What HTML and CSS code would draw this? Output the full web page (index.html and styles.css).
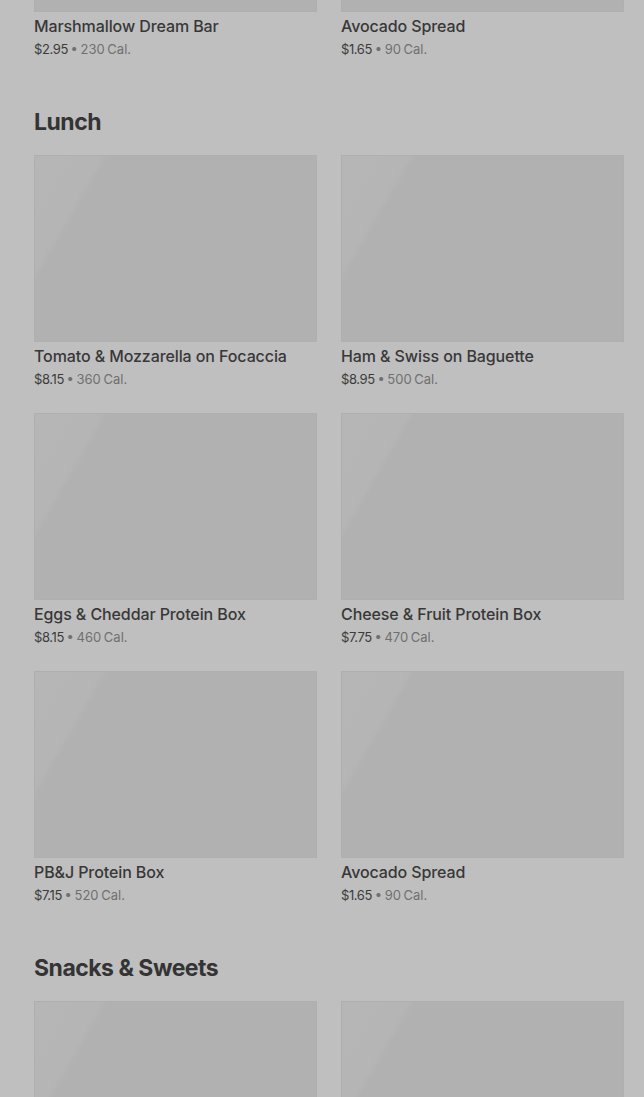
FILE: index.html
```html
<!DOCTYPE html>
<html lang="en">
<head>
<meta charset="utf-8">
<title>Menu</title>
<link rel="stylesheet" href="styles.css">
</head>
<body>
<main class="page">
  <section class="section section-first">
    <div class="grid">
      <div class="card"><div class="thumb"></div><div class="name">Marshmallow Dream Bar</div><div class="meta"><span class="price">$2.95</span> <span class="cal">• 230 Cal.</span></div></div>
      <div class="card"><div class="thumb"></div><div class="name">Avocado Spread</div><div class="meta"><span class="price">$1.65</span> <span class="cal">• 90 Cal.</span></div></div>
    </div>
  </section>
  <section class="section">
    <h2 class="heading">Lunch</h2>
    <div class="grid">
      <div class="card"><div class="thumb"></div><div class="name">Tomato &amp; Mozzarella on Focaccia</div><div class="meta"><span class="price">$8.15</span> <span class="cal">• 360 Cal.</span></div></div>
      <div class="card"><div class="thumb"></div><div class="name">Ham &amp; Swiss on Baguette</div><div class="meta"><span class="price">$8.95</span> <span class="cal">• 500 Cal.</span></div></div>
      <div class="card"><div class="thumb"></div><div class="name">Eggs &amp; Cheddar Protein Box</div><div class="meta"><span class="price">$8.15</span> <span class="cal">• 460 Cal.</span></div></div>
      <div class="card"><div class="thumb"></div><div class="name">Cheese &amp; Fruit Protein Box</div><div class="meta"><span class="price">$7.75</span> <span class="cal">• 470 Cal.</span></div></div>
      <div class="card"><div class="thumb"></div><div class="name">PB&amp;J Protein Box</div><div class="meta"><span class="price">$7.15</span> <span class="cal">• 520 Cal.</span></div></div>
      <div class="card"><div class="thumb"></div><div class="name">Avocado Spread</div><div class="meta"><span class="price">$1.65</span> <span class="cal">• 90 Cal.</span></div></div>
    </div>
  </section>
  <section class="section">
    <h2 class="heading">Snacks &amp; Sweets</h2>
    <div class="grid">
      <div class="card"><div class="thumb"></div></div>
      <div class="card"><div class="thumb"></div></div>
    </div>
  </section>
</main>
</body>
</html>
```

FILE: styles.css
```css
html, body {
  margin: 0;
  padding: 0;
  background: #bfbfbf;
  overflow: hidden;
}
body {
  font-family: Inter, "Liberation Sans", sans-serif;
  color: #363636;
}
.page {
  padding: 0 20px 0 34px;
  margin-top: -175px;
}
.section + .section {
  margin-top: 48px;
}
.heading {
  margin: 0 0 17px;
  font-size: 23px;
  line-height: 32px;
  font-weight: 700;
  letter-spacing: -0.5px;
  color: #343434;
}
.grid {
  display: grid;
  grid-template-columns: 283px 283px;
  column-gap: 24px;
  row-gap: 25px;
}
.thumb {
  height: 187px;
  box-sizing: border-box;
  border: 1px solid #afafaf;
  background: linear-gradient(120deg, #b6b6b6 0%, #b5b5b5 17%, #b1b1b1 19%, #b1b1b1 100%);
}
.name {
  margin-top: 4px;
  font-size: 16px;
  line-height: 20px;
  font-weight: 500;
  letter-spacing: -0.1px;
  color: #383838;
  white-space: nowrap;
}
.meta {
  margin-top: 4px;
  font-size: 13px;
  line-height: 18px;
  word-spacing: -1px;
}
.price {
  color: #3c3c3c;
  letter-spacing: -0.4px;
}
.cal {
  color: #707070;
}
```
